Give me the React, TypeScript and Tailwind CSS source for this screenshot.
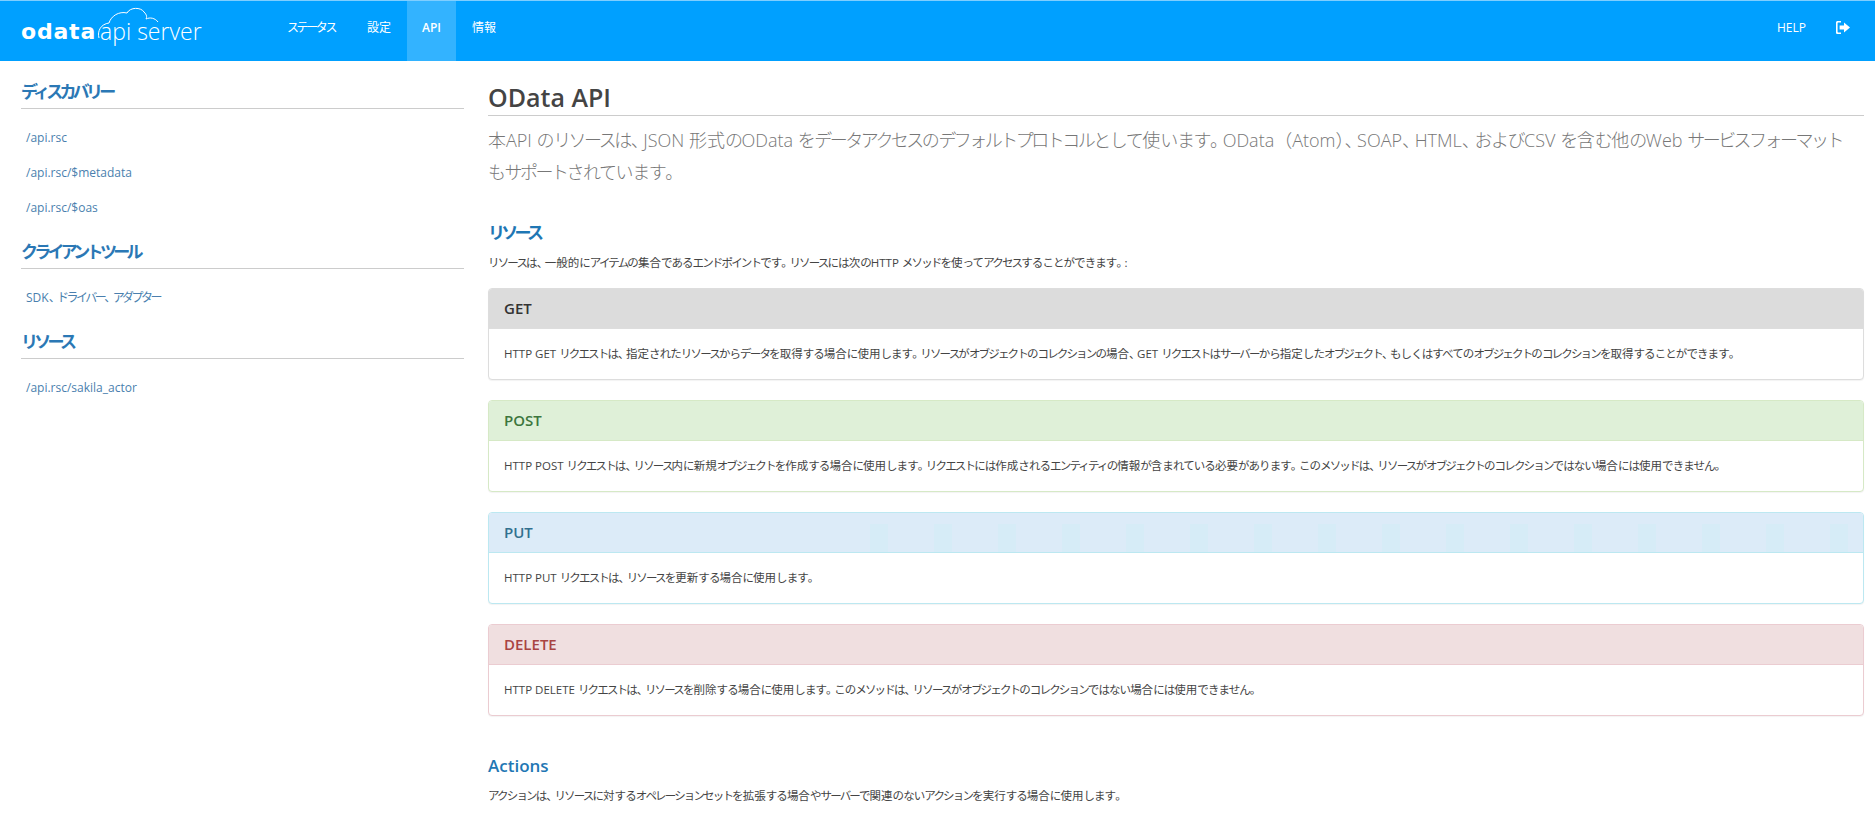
const nav = [
  { label: "ステータス", active: false },
  { label: "設定", active: false },
  { label: "API", active: true },
  { label: "情報", active: false },
];

const sideGroups = [
  { title: "ディスカバリー", links: ["/api.rsc", "/api.rsc/$metadata", "/api.rsc/$oas"] },
  { title: "クライアントツール", links: ["SDK、ドライバー、アダプター"] },
  { title: "リソース", links: ["/api.rsc/sakila_actor"] },
];

const panels = [
  {
    name: "GET",
    border: "border-[#dddddd]",
    head: "bg-[#dcdcdc] text-[#333333]",
    text: "HTTP GET リクエストは、指定されたリソースからデータを取得する場合に使用します。リソースがオブジェクトのコレクションの場合、GET リクエストはサーバーから指定したオブジェクト、もしくはすべてのオブジェクトのコレクションを取得することができます。",
  },
  {
    name: "POST",
    border: "border-[#d6e9c6]",
    head: "bg-[#dff0d8] text-[#3c763d]",
    text: "HTTP POST リクエストは、リソース内に新規オブジェクトを作成する場合に使用します。リクエストには作成されるエンティティの情報が含まれている必要があります。このメソッドは、リソースがオブジェクトのコレクションではない場合には使用できません。",
  },
  {
    name: "PUT",
    border: "border-[#bce8f1]",
    head: "bg-[#dcebf8] text-[#31708f]",
    text: "HTTP PUT リクエストは、リソースを更新する場合に使用します。",
  },
  {
    name: "DELETE",
    border: "border-[#ebccd1]",
    head: "bg-[#f0dfe0] text-[#a94442]",
    text: "HTTP DELETE リクエストは、リソースを削除する場合に使用します。このメソッドは、リソースがオブジェクトのコレクションではない場合には使用できません。",
  },
];

const ghostBars = Array.from({ length: 16 }, (_, i) => i);

function Jp({ text, kata = "tracking-[-0.16em]" }: { text: string; kata?: string }) {
  const runs = text.match(/[、。]+|[\u3040-\u309f]+|[\u30a0-\u30ff]+|[^、。\u3040-\u30ff]+/g) ?? [];
  return (
    <>
      {runs.map((run, i) => {
        if (/^[、。]/.test(run)) return <span key={i} className="tracking-[-0.3em]">{run}</span>;
        if (/^[\u3040-\u309f]/.test(run)) return <span key={i} className="tracking-[-0.08em]">{run}</span>;
        if (/^[\u30a0-\u30ff]/.test(run)) return <span key={i} className={kata}>{run}</span>;
        return <span key={i}>{run}</span>;
      })}
    </>
  );
}

function Logo() {
  return (
    <div className="flex items-center pl-[21px] pt-[1px] text-white">
      <span className="font-['DejaVu_Sans',sans-serif] text-[22px] font-bold leading-none tracking-[0.8px]">odata</span>
      <span className="relative ml-[4px] text-[23px] font-light leading-none">
        <svg
          className="absolute left-[-3px] top-[-13px]"
          width="70"
          height="36"
          viewBox="0 0 70 36"
          fill="none"
          stroke="white"
          strokeWidth="1"
        >
          <path d="M2 31C0 24 4 17 12 16C14 9 22 4 30 6C33 0 44 0 47 5C50 8 50 10 49 12C53 10 58 11 61 15" />
        </svg>
        api server
      </span>
    </div>
  );
}

function LogoutIcon() {
  return (
    <svg width="14" height="13" viewBox="0 0 14 13" fill="white">
      <path d="M5 0H1.6C.7 0 0 .7 0 1.6v9.8C0 12.3.7 13 1.6 13H5v-1.6H2.2c-.4 0-.6-.2-.6-.6V2.2c0-.4.2-.6.6-.6H5V0z" />
      <path d="M8 1.6L14 6.5 8 11.4V8.6H3.6V4.4H8V1.6z" />
    </svg>
  );
}

export default function App() {
  return (
    <div className="min-h-[838px] bg-white font-['Open_Sans','Noto_Sans_CJK_JP',sans-serif] text-[#555555]">
      <header className="flex h-[61px] items-stretch border-t border-t-[#7fceff] bg-[#00a0ff] text-white">
        <div className="flex w-[271px] items-center">
          <Logo />
        </div>
        <nav className="flex text-[12px]">
          {nav.map((item) => (
            <a
              key={item.label}
              className={`flex h-[60px] items-center pb-[7px] ${item.active ? "bg-[#33b3ff] px-[15px] font-semibold" : "px-4"}`}
            >
              <Jp text={item.label} kata="tracking-[-0.2em]" />
            </a>
          ))}
        </nav>
        <div className="ml-auto flex items-center gap-[30px] pb-[7px] pr-[25px] text-[12px]">
          <a>HELP</a>
          <LogoutIcon />
        </div>
      </header>

      <div className="flex items-start pl-[21px] pr-[11px]">
        <aside className="w-[443px] shrink-0 pt-[19px]">
          {sideGroups.map((group) => (
            <div key={group.title} className="mb-[15px]">
              <h3 className="border-b border-[#cccccc] pb-[5px] text-[17px] font-semibold leading-[23px] text-[#2b78b5]">
                <Jp text={group.title} kata="tracking-[-0.22em]" />
              </h3>
              <ul className="mt-[11px]">
                {group.links.map((link) => (
                  <li key={link} className="px-[5px] py-[9px] text-[12px] leading-[17px] text-[#4a7fae]">
                    <Jp text={link} kata="tracking-[-0.21em]" />
                  </li>
                ))}
              </ul>
            </div>
          ))}
        </aside>

        <main className="ml-[24px] min-w-0 flex-1 pt-[21px]">
          <h1 className="border-b border-[#cccccc] pb-[3px] text-[25px] font-semibold leading-[30px] text-[#444444]">
            OData API
          </h1>
          <p className="mt-[8px] text-[18px] font-light leading-[32px] text-[#777777]">
            <Jp
              kata="tracking-[-0.14em]"
              text="本API のリソースは、JSON 形式のOData をデータアクセスのデフォルトプロトコルとして使います。OData（Atom）、SOAP、HTML、およびCSV を含む他のWeb サービスフォーマット"
            />
            <br />
            <Jp kata="tracking-[-0.14em]" text="もサポートされています。" />
          </p>

          <h2 className="mt-[33px] text-[17px] font-semibold leading-[24px] text-[#1f77b4]">
            <Jp text="リソース" kata="tracking-[-0.22em]" />
          </h2>
          <p className="mt-[9px] text-[11.5px] leading-[17px] text-[#444444]">
            <Jp text="リソースは、一般的にアイテムの集合であるエンドポイントです。リソースには次のHTTP メソッドを使ってアクセスすることができます。:" />
          </p>

          <div className="mt-[17px] flex flex-col gap-[20px]">
            {panels.map((panel) => (
              <section
                key={panel.name}
                className={`overflow-hidden rounded-[4px] border bg-white shadow-[0_1px_1px_rgba(0,0,0,0.05)] ${panel.border}`}
              >
                <div className={`relative flex h-[40px] items-center border-b px-[15px] text-[15px] font-semibold ${panel.border} ${panel.head}`}>
                  {panel.name}
                  {panel.name === "PUT" && (
                    <div className="absolute bottom-0 left-[381px] top-[11px] flex gap-[46px]">
                      {ghostBars.map((i) => (
                        <span key={i} className="block w-[18px] bg-[#d6ecf7]" />
                      ))}
                    </div>
                  )}
                </div>
                <div className="flex h-[50px] items-center px-[15px] text-[11.5px] text-[#444444]">
                  <span><Jp text={panel.text} /></span>
                </div>
              </section>
            ))}
          </div>

          <h2 className="mt-[38px] text-[17px] font-semibold leading-[24px] text-[#1f77b4]">Actions</h2>
          <p className="mt-[9px] text-[11.5px] leading-[17px] text-[#444444]">
            <Jp text="アクションは、リソースに対するオペレーションセットを拡張する場合やサーバーで関連のないアクションを実行する場合に使用します。" />
          </p>
        </main>
      </div>
    </div>
  );
}
